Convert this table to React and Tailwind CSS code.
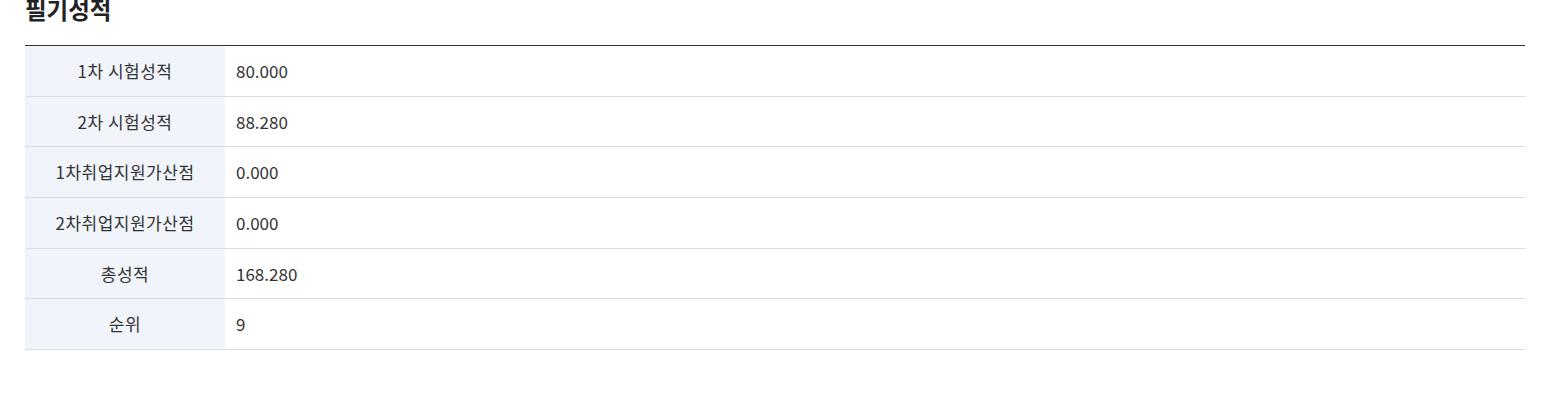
const rows = [
	{ label: "1차 시험성적", value: "80.000" },
	{ label: "2차 시험성적", value: "88.280" },
	{ label: "1차취업지원가산점", value: "0.000" },
	{ label: "2차취업지원가산점", value: "0.000" },
	{ label: "총성적", value: "168.280" },
	{ label: "순위", value: "9" },
];

const App = () => {
	return (
		<div
			className="min-h-screen bg-white pl-[25px] pr-[32px] text-[#333]"
			style={{ fontFamily: '"Noto Sans CJK KR", "Noto Sans", sans-serif' }}
		>
			<h3 className="-mt-[8px] mb-[19px] text-[23.5px] leading-[34px] font-bold text-[#222]">
				필기성적
			</h3>

			{/* Score table */}
			<table className="w-full border-collapse border-t border-[#333] text-[17px]">
				<tbody>
					{rows.map((row) => (
						<tr key={row.label} className="border-b border-[#dadce6]">
							<th className="h-[50.67px] w-[200px] bg-[#f1f4fb] p-0 text-center font-normal tracking-[0.5px] text-[#333]">
								{row.label}
							</th>
							<td className="h-[50.67px] pl-[11px] text-left text-[#333]">{row.value}</td>
						</tr>
					))}
				</tbody>
			</table>
		</div>
	);
};

export default App;
